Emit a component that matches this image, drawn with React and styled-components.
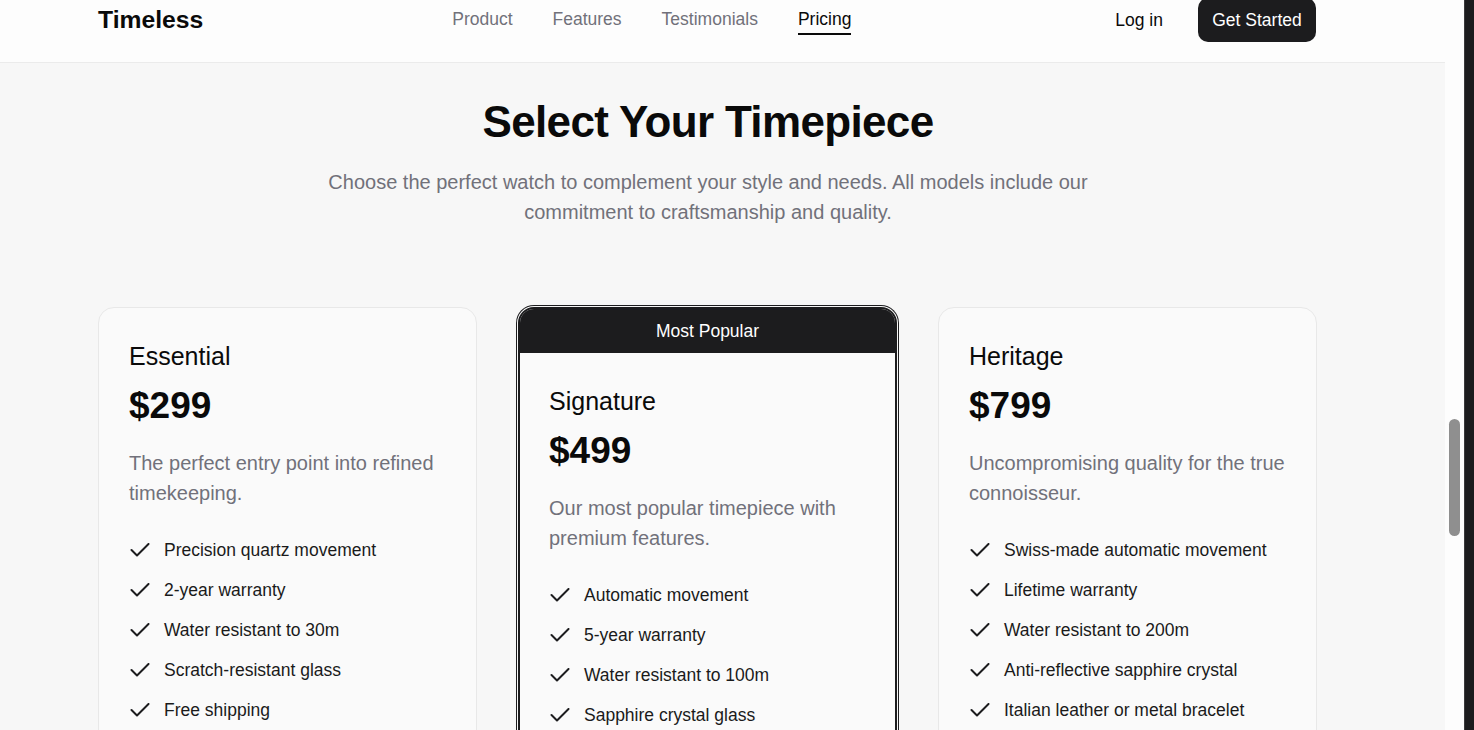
import React from "react";
import styled, { createGlobalStyle } from "styled-components";

const dark = "#1c1c1e";
const muted = "#71717a";

const plans = [
  {
    name: "Essential",
    price: "$299",
    blurb: "The perfect entry point into refined timekeeping.",
    features: [
      "Precision quartz movement",
      "2-year warranty",
      "Water resistant to 30m",
      "Scratch-resistant glass",
      "Free shipping",
    ],
  },
  {
    name: "Signature",
    price: "$499",
    blurb: "Our most popular timepiece with premium features.",
    popular: true,
    features: [
      "Automatic movement",
      "5-year warranty",
      "Water resistant to 100m",
      "Sapphire crystal glass",
      "Premium leather strap",
      "Free express shipping",
    ],
  },
  {
    name: "Heritage",
    price: "$799",
    blurb: "Uncompromising quality for the true connoisseur.",
    features: [
      "Swiss-made automatic movement",
      "Lifetime warranty",
      "Water resistant to 200m",
      "Anti-reflective sapphire crystal",
      "Italian leather or metal bracelet",
      "White-glove delivery",
    ],
  },
];

function CheckIcon() {
  return (
    <CheckSvg viewBox="0 0 22 14" width="22" height="14">
      <path
        d="M2.5 7 L8 12.5 L19.5 1"
        fill="none"
        stroke={dark}
        strokeWidth="2"
        strokeLinecap="round"
        strokeLinejoin="round"
      />
    </CheckSvg>
  );
}

function App() {
  return (
    <>
      <GlobalStyle />
      <Screen>
        <Page>
          <Header>
            <HeaderRow>
              <Logo>Timeless</Logo>
              <Nav>
                <NavLink>Product</NavLink>
                <NavLink>Features</NavLink>
                <NavLink>Testimonials</NavLink>
                <NavLink $active>Pricing</NavLink>
              </Nav>
              <Actions>
                <LogIn>Log in</LogIn>
                <StartButton>Get Started</StartButton>
              </Actions>
            </HeaderRow>
          </Header>

          <Section>
            <Title>Select Your Timepiece</Title>
            <Subtitle>
              Choose the perfect watch to complement your style and needs. All
              models include our commitment to craftsmanship and quality.
            </Subtitle>

            <Grid>
              {plans.map((plan) => (
                <PlanCard key={plan.name} $popular={plan.popular}>
                  {plan.popular && <Badge>Most Popular</Badge>}
                  <CardBody $popular={plan.popular}>
                    <PlanName>{plan.name}</PlanName>
                    <Price>{plan.price}</Price>
                    <Blurb>{plan.blurb}</Blurb>
                    <FeatureList>
                      {plan.features.map((f) => (
                        <Feature key={f}>
                          <CheckIcon />
                          {f}
                        </Feature>
                      ))}
                    </FeatureList>
                    <ChooseButton $popular={plan.popular}>
                      Choose {plan.name}
                    </ChooseButton>
                  </CardBody>
                </PlanCard>
              ))}
            </Grid>
          </Section>
        </Page>

        <ScrollTrack>
          <ScrollThumb />
        </ScrollTrack>
        <WindowEdge />
      </Screen>
    </>
  );
}

const GlobalStyle = createGlobalStyle`
  * { box-sizing: border-box; }
  html, body {
    margin: 0;
    padding: 0;
    overflow: hidden;
    font-family: "Liberation Sans", Arial, sans-serif;
    background: #f7f7f7;
  }
`;

const Screen = styled.div`
  display: flex;
  width: 1474px;
  height: 730px;
  overflow: hidden;
`;

const Page = styled.div`
  flex: 0 0 1445px;
  background: #f7f7f7;
  overflow: hidden;
`;

const Header = styled.header`
  height: 63px;
  background: #fdfdfd;
  border-bottom: 1px solid #ebebeb;
`;

const HeaderRow = styled.div`
  width: 1218px;
  margin-left: 98px;
  height: 40px;
  display: flex;
  align-items: center;
`;

const Logo = styled.div`
  font-size: 24.7px;
  font-weight: 700;
  line-height: 32px;
  color: #0a0a0a;
`;

const Nav = styled.nav`
  display: flex;
  gap: 40px;
  margin-left: 249px;
`;

const NavLink = styled.a`
  font-size: 17.5px;
  line-height: 24px;
  padding: 2px 0;
  border-bottom: 2px solid ${(p) => (p.$active ? "#0a0a0a" : "transparent")};
  color: ${(p) => (p.$active ? "#0a0a0a" : muted)};
  cursor: pointer;
`;

const Actions = styled.div`
  margin-left: auto;
  display: flex;
  align-items: center;
  gap: 35px;
`;

const LogIn = styled.a`
  font-size: 17.5px;
  color: #0a0a0a;
`;

const StartButton = styled.button`
  height: 44px;
  width: 118px;
  padding: 0;
  border: none;
  border-radius: 10px;
  background: ${dark};
  color: #fff;
  font-family: inherit;
  font-size: 17.5px;
  font-weight: 500;
`;

const Section = styled.section`
  width: 1220px;
  margin-left: 98px;
  padding-top: 34px;
  display: flex;
  flex-direction: column;
  align-items: center;
`;

const Title = styled.h1`
  margin: 0;
  font-size: 44px;
  line-height: 49px;
  font-weight: 700;
  letter-spacing: -0.65px;
  color: #0a0a0a;
`;

const Subtitle = styled.p`
  margin: 21px 0 0;
  max-width: 768px;
  text-align: center;
  font-size: 20px;
  line-height: 30px;
  color: ${muted};
`;

const Grid = styled.div`
  margin-top: 80px;
  width: 100%;
  display: grid;
  grid-template-columns: repeat(3, 379px);
  gap: 41px;
  align-items: start;
`;

const PlanCard = styled.div`
  background: #fafafa;
  border-radius: 16px;
  overflow: hidden;
  border: ${(p) => (p.$popular ? `2px solid ${dark}` : "1px solid #e8e8e8")};
  box-shadow: ${(p) =>
    p.$popular ? `0 0 0 1px #f7f7f7, 0 0 0 2px ${dark}` : "none"};
`;

const Badge = styled.div`
  height: 44px;
  background: ${dark};
  color: #fff;
  display: flex;
  align-items: center;
  justify-content: center;
  font-size: 17.5px;
  font-weight: 500;
`;

const CardBody = styled.div`
  padding: 32px ${(p) => (p.$popular ? "29px" : "30px")};
`;

const PlanName = styled.h3`
  margin: 0;
  font-size: 25px;
  line-height: 32px;
  font-weight: 400;
  color: #0a0a0a;
`;

const Price = styled.div`
  margin-top: 12px;
  font-size: 37px;
  line-height: 44px;
  font-weight: 700;
  color: #0a0a0a;
`;

const Blurb = styled.p`
  margin: 20px 0 0;
  font-size: 20px;
  line-height: 30px;
  color: ${muted};
`;

const FeatureList = styled.ul`
  list-style: none;
  margin: 30px 0 0;
  padding: 0;
  display: flex;
  flex-direction: column;
  gap: 16px;
`;

const Feature = styled.li`
  display: flex;
  align-items: center;
  gap: 13px;
  font-size: 17.5px;
  line-height: 24px;
  color: #1a1a1a;
`;

const CheckSvg = styled.svg`
  flex: 0 0 auto;
`;

const ChooseButton = styled.button`
  margin-top: 32px;
  width: 100%;
  height: 48px;
  border-radius: 10px;
  font-family: inherit;
  font-size: 17.5px;
  border: 1px solid ${dark};
  background: ${(p) => (p.$popular ? dark : "transparent")};
  color: ${(p) => (p.$popular ? "#fff" : dark)};
`;

const ScrollTrack = styled.div`
  flex: 0 0 19px;
  background: #fdfdfd;
  display: flex;
  flex-direction: column;
  align-items: center;
`;

const ScrollThumb = styled.div`
  margin-top: 419px;
  width: 11px;
  height: 117px;
  border-radius: 6px;
  background: #8f8f8f;
`;

const WindowEdge = styled.div`
  flex: 0 0 10px;
  background: ${dark};
  border-left: 1px solid #3a3a3c;
`;

export default App;
